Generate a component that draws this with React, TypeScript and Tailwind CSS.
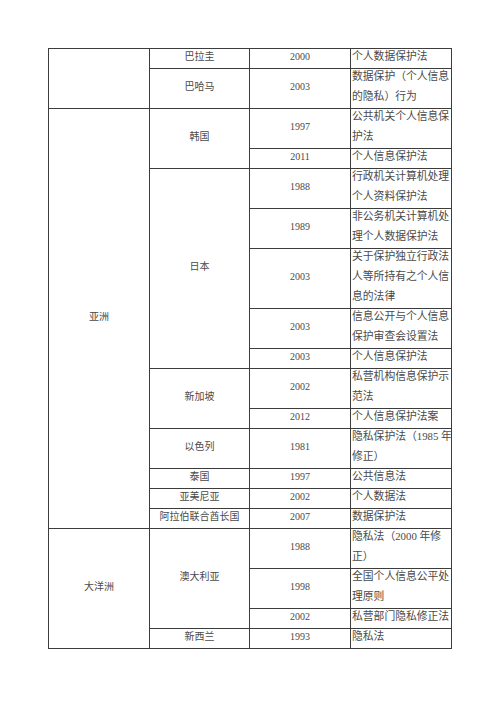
const FONT = "font-['Liberation_Serif','Noto_Sans_CJK_SC',serif]";

type Row = {
  h: string;
  region?: { text: string; span: number };
  country?: { text: string; span: number };
  year: string;
  law: string[];
};

const rows: Row[] = [
  { h: "h-[20px]", region: { text: "", span: 2 }, country: { text: "巴拉圭", span: 1 }, year: "2000", law: ["个人数据保护法"] },
  { h: "h-[40px]", country: { text: "巴哈马", span: 1 }, year: "2003", law: ["数据保护（个人信息", "的隐私）行为"] },
  { h: "h-[40px]", region: { text: "亚洲", span: 13 }, country: { text: "韩国", span: 2 }, year: "1997", law: ["公共机关个人信息保", "护法"] },
  { h: "h-[20px]", year: "2011", law: ["个人信息保护法"] },
  { h: "h-[40px]", country: { text: "日本", span: 5 }, year: "1988", law: ["行政机关计算机处理", "个人资料保护法"] },
  { h: "h-[40px]", year: "1989", law: ["非公务机关计算机处", "理个人数据保护法"] },
  { h: "h-[60px]", year: "2003", law: ["关于保护独立行政法", "人等所持有之个人信", "息的法律"] },
  { h: "h-[40px]", year: "2003", law: ["信息公开与个人信息", "保护审查会设置法"] },
  { h: "h-[20px]", year: "2003", law: ["个人信息保护法"] },
  { h: "h-[40px]", country: { text: "新加坡", span: 2 }, year: "2002", law: ["私营机构信息保护示", "范法"] },
  { h: "h-[20px]", year: "2012", law: ["个人信息保护法案"] },
  { h: "h-[40px]", country: { text: "以色列", span: 1 }, year: "1981", law: ["隐私保护法（1985 年", "修正）"] },
  { h: "h-[20px]", country: { text: "泰国", span: 1 }, year: "1997", law: ["公共信息法"] },
  { h: "h-[20px]", country: { text: "亚美尼亚", span: 1 }, year: "2002", law: ["个人数据法"] },
  { h: "h-[20px]", country: { text: "阿拉伯联合酋长国", span: 1 }, year: "2007", law: ["数据保护法"] },
  { h: "h-[40px]", region: { text: "大洋洲", span: 4 }, country: { text: "澳大利亚", span: 3 }, year: "1988", law: ["隐私法（2000 年修", "正）"] },
  { h: "h-[40px]", year: "1998", law: ["全国个人信息公平处", "理原则"] },
  { h: "h-[20px]", year: "2002", law: ["私营部门隐私修正法"] },
  { h: "h-[20px]", country: { text: "新西兰", span: 1 }, year: "1993", law: ["隐私法"] },
];

const cell = "border border-[#3c3c3c] p-0";
const label = "align-middle text-center text-[10px] leading-[15px] pb-[4px]";

export default function App() {
  return (
    <div className={`w-[500px] h-[707px] bg-white pt-[48px] pl-[48px] ${FONT} text-[#4a4a4a]`}>
      <table className="table-fixed border-collapse w-[403px]">
        <colgroup>
          <col className="w-[101px]" />
          <col className="w-[100px]" />
          <col className="w-[101px]" />
          <col className="w-[101px]" />
        </colgroup>
        <tbody>
          {rows.map((r, i) => (
            <tr key={i} className={r.h}>
              {r.region && (
                <td rowSpan={r.region.span} className={`${cell} ${label}`}>
                  {r.region.text}
                </td>
              )}
              {r.country && (
                <td rowSpan={r.country.span} className={`${cell} ${label} whitespace-nowrap`}>
                  {r.country.text}
                </td>
              )}
              <td className={`${cell} ${label}`}>{r.year}</td>
              <td className={`${cell} align-top text-left text-[10.8px] leading-[20px] whitespace-nowrap pl-[1px]`}>
                <div className="-mt-[3px]">
                  {r.law.map((l, j) => (
                    <div key={j}>{l}</div>
                  ))}
                </div>
              </td>
            </tr>
          ))}
        </tbody>
      </table>
    </div>
  );
}
